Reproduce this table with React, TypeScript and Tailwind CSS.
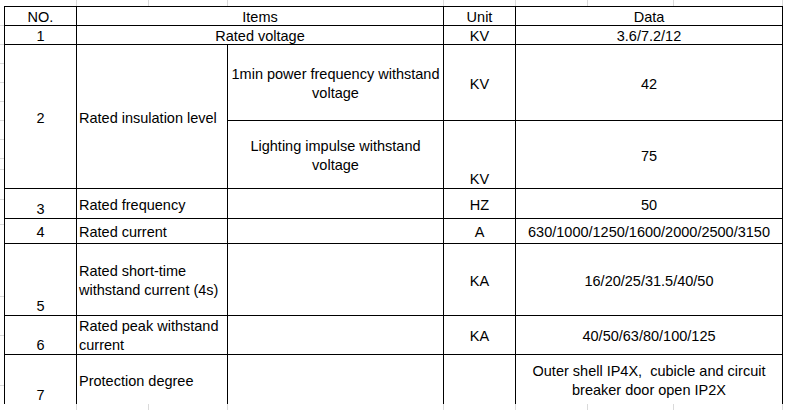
import React from "react";

const F = { fontFamily: '"Liberation Sans", Arial, sans-serif' };

function C({
  children,
  cls = "",
}: {
  children?: React.ReactNode;
  cls?: string;
}) {
  return <div className={"bg-white flex whitespace-nowrap " + cls}>{children}</div>;
}

const mid = "items-center justify-center text-center pt-[3px]";
const mid2 = "items-center justify-center text-center pt-[2px]";
const left = "items-center justify-start text-left pl-[2px] pt-[3px]";
const left2 = "items-center justify-start text-left pl-[2px] pt-[2px]";
const bottom = "items-end justify-center text-center leading-[16px] pb-[1px]";

function GridStrip() {
  return (
    <div className="flex h-[6px] w-[786px]">
      <div className="w-[76px]" />
      <div className="w-[72px] border-l border-[#dadada]" />
      <div className="w-[79px] border-l border-[#dadada]" />
      <div className="w-[216px] border-l border-[#dadada]" />
      <div className="w-[72px] border-l border-[#dadada]" />
      <div className="w-[72px] border-l border-[#dadada]" />
      <div className="w-[86px] border-l border-[#dadada]" />
      <div className="w-[109px] border-l border-[#dadada]" />
      <div className="flex-1 border-l border-[#dadada]" />
    </div>
  );
}

function LeftStrip() {
  return (
    <div className="flex w-[4px] flex-col">
      <div className="h-[19px]" />
      <div className="h-[19px] border-t border-[#dadada]" />
      <div className="h-[19px] border-t border-[#dadada]" />
      <div className="h-[19px] border-t border-[#dadada]" />
      <div className="h-[19px] border-t border-[#dadada]" />
      <div className="h-[19px] border-t border-[#dadada]" />
      <div className="h-[19px] border-t border-[#dadada]" />
      <div className="h-[19px] border-t border-[#dadada]" />
      <div className="h-[11px] border-t border-[#dadada]" />
      <div className="h-[30px] border-t border-[#dadada]" />
      <div className="h-[25px] border-t border-[#dadada]" />
      <div className="h-[72px] border-t border-[#dadada]" />
      <div className="h-[39px] border-t border-[#dadada]" />
      <div className="h-[50px] border-t border-[#dadada]" />
      <div className="flex-1 border-t border-[#dadada]" />
    </div>
  );
}

export default function App() {
  return (
    <div
      className="flex h-[410px] w-[786px] flex-col overflow-hidden bg-white text-[14.5px] leading-[19px] text-black"
      style={F}
    >
      <GridStrip />
      <div className="flex h-[398px]">
        <LeftStrip />
        <div className="grid h-[398px] w-[779px] grid-cols-[71px_150px_215px_71px_266px] grid-rows-[18px_18px_75px_67px_29px_24px_71px_38px_49px] gap-px bg-black p-px">
          {/* header */}
          <C cls={mid}>NO.</C>
          <C cls={mid + " col-span-2"}>Items</C>
          <C cls={mid}>Unit</C>
          <C cls={mid}>Data</C>
          {/* 1 */}
          <C cls={mid}>1</C>
          <C cls={mid + " col-span-2"}>Rated voltage</C>
          <C cls={mid}>KV</C>
          <C cls={mid}>3.6/7.2/12</C>
          {/* 2 */}
          <C cls={mid + " row-span-2"}>2</C>
          <C cls={left + " row-span-2"}>Rated insulation level</C>
          <C cls={mid2}>
            <span>
              1min power frequency withstand
              <br />
              voltage
            </span>
          </C>
          <C cls={mid}>KV</C>
          <C cls={mid}>42</C>
          <C cls={mid2}>
            <span>
              Lighting impulse withstand
              <br />
              voltage
            </span>
          </C>
          <C cls={bottom}>KV</C>
          <C cls={mid}>75</C>
          {/* 3 */}
          <C cls={bottom}>3</C>
          <C cls={left}>Rated frequency</C>
          <C />
          <C cls={mid}>HZ</C>
          <C cls={mid}>50</C>
          {/* 4 */}
          <C cls={mid}>4</C>
          <C cls={left}>Rated current</C>
          <C />
          <C cls={mid}>A</C>
          <C cls={mid}>630/1000/1250/1600/2000/2500/3150</C>
          {/* 5 */}
          <C cls={bottom}>5</C>
          <C cls={left2}>
            <span>
              Rated short-time
              <br />
              withstand current (4s)
            </span>
          </C>
          <C />
          <C cls={mid}>KA</C>
          <C cls={mid}>16/20/25/31.5/40/50</C>
          {/* 6 */}
          <C cls={bottom}>6</C>
          <C cls={left2}>
            <span>
              Rated peak withstand
              <br />
              current
            </span>
          </C>
          <C />
          <C cls={mid}>KA</C>
          <C cls={mid}>40/50/63/80/100/125</C>
          {/* 7 */}
          <C cls={bottom}>7</C>
          <C cls={left}>Protection degree</C>
          <C />
          <C />
          <C cls={mid2 + " whitespace-pre"}>
            <span>
              {"Outer shell IP4X,  cubicle and circuit"}
              <br />
              {"breaker door open IP2X"}
            </span>
          </C>
        </div>
        <div className="flex-1" />
      </div>
      <GridStrip />
    </div>
  );
}
